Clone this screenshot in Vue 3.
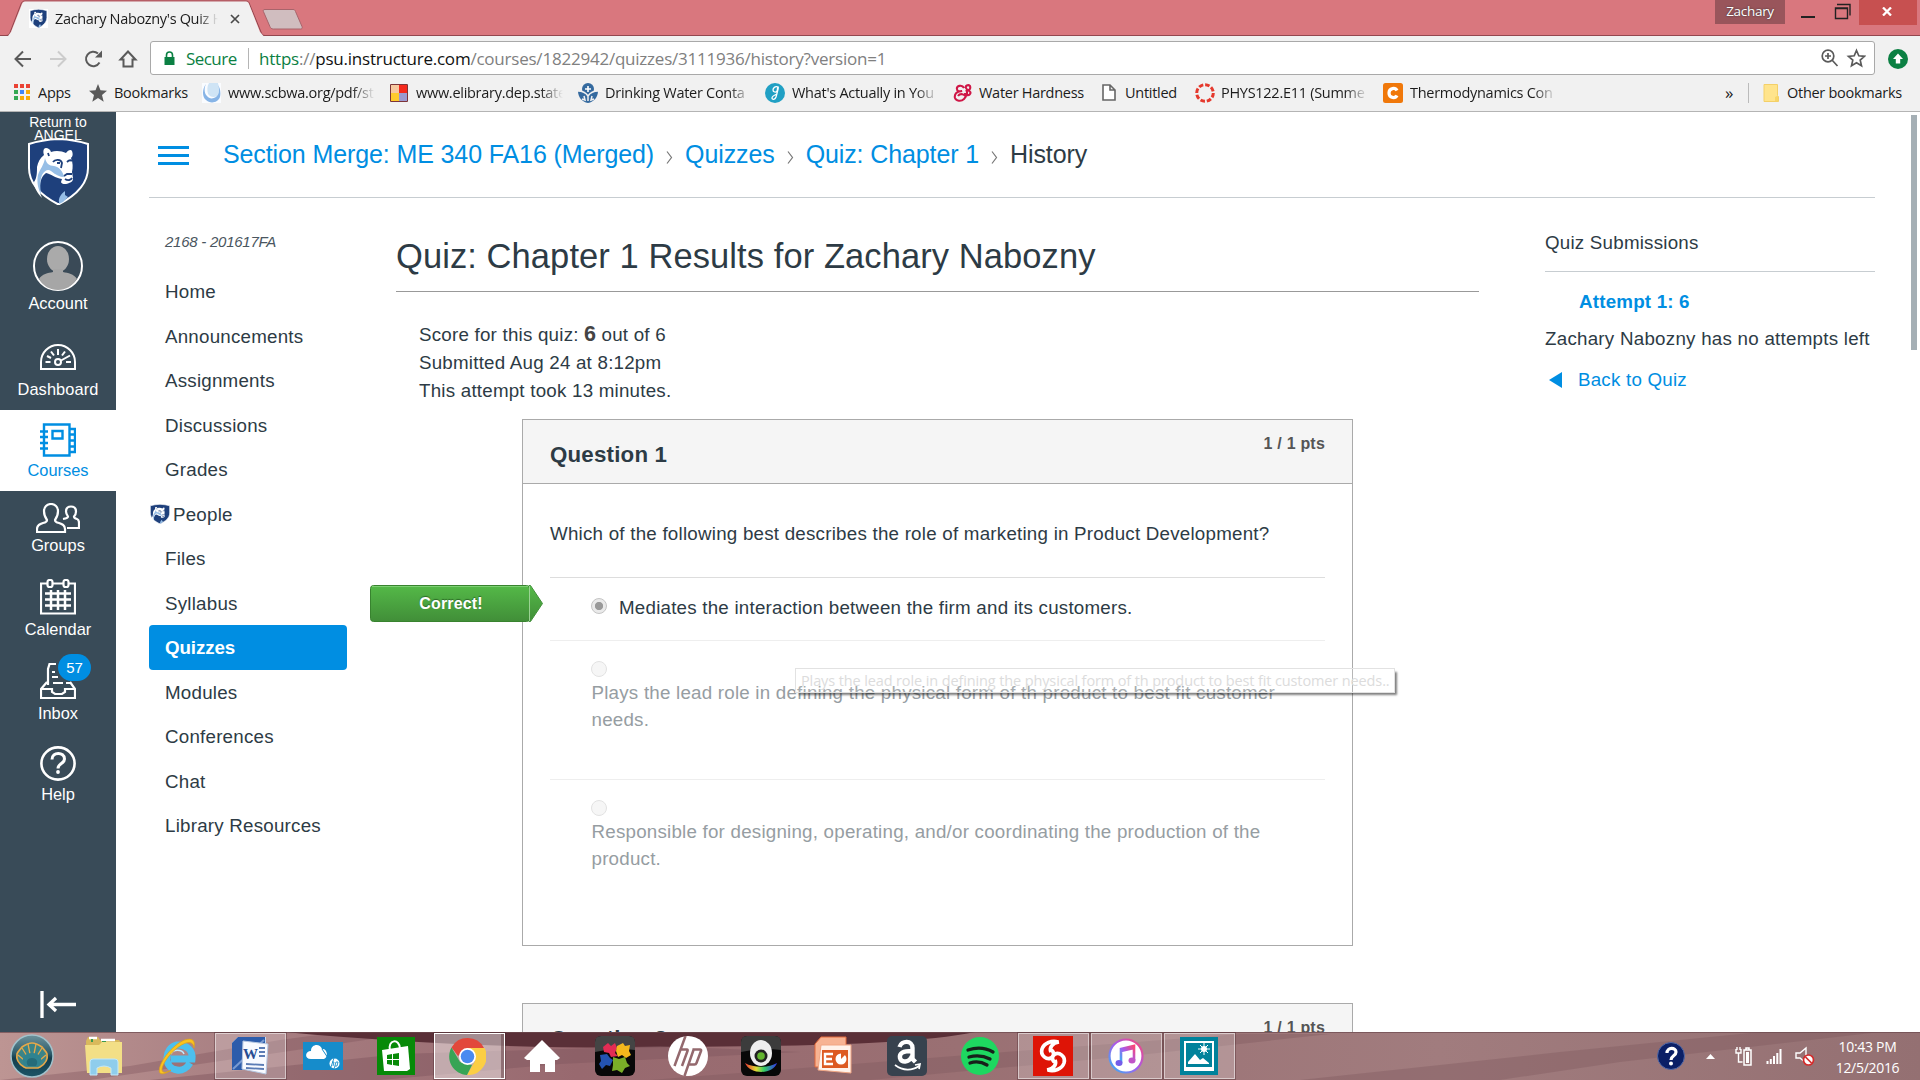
<script setup>
const bookmarks = [
  { icon: 'apps', text: 'Apps' },
  { icon: 'star', text: 'Bookmarks' },
  { icon: 'drop', text: 'www.scbwa.org/pdf/st', fade: true },
  { icon: 'grid', text: 'www.elibrary.dep.state', fade: true },
  { icon: 'water', text: 'Drinking Water Conta', fade: true },
  { icon: 'glass', text: "What's Actually in You", fade: true },
  { icon: 'amp', text: 'Water Hardness' },
  { icon: 'doc', text: 'Untitled' },
  { icon: 'ring', text: 'PHYS122.E11 (Summe', fade: true },
  { icon: 'chegg', text: 'Thermodynamics Con', fade: true },
]
const globalNav = [
  { id: 'account', label: 'Account' },
  { id: 'dashboard', label: 'Dashboard' },
  { id: 'courses', label: 'Courses' },
  { id: 'groups', label: 'Groups' },
  { id: 'calendar', label: 'Calendar' },
  { id: 'inbox', label: 'Inbox' },
  { id: 'help', label: 'Help' },
]
const courseNav = ['Home', 'Announcements', 'Assignments', 'Discussions', 'Grades', 'People', 'Files', 'Syllabus', 'Quizzes', 'Modules', 'Conferences', 'Chat', 'Library Resources']
const crumbs = ['Section Merge: ME 340 FA16 (Merged)', 'Quizzes', 'Quiz: Chapter 1']
const tasks = [
  { id: 'shell' }, { id: 'folder' }, { id: 'ie' }, { id: 'word', open: true }, { id: 'cloud' }, { id: 'store' },
  { id: 'chrome', open: true, active: true }, { id: 'home' }, { id: 'puzzle' }, { id: 'hp' }, { id: 'cam' }, { id: 'ppt' },
  { id: 'amazon' }, { id: 'spotify' }, { id: 'swirl', open: true }, { id: 'itunes', open: true }, { id: 'photos', open: true },
]
</script>

<template>
  <div class="screen">
    <svg class="defs" width="0" height="0">
      <defs>
        <symbol id="lion" viewBox="0 0 61 67">
          <path d="M30.500 1C20 1.500 10 3 1 6v24c0 17 13 28 29.500 36.500C47 58 60 47 60 30V6C51 3 41 1.500 30.500 1z" fill="#1e407c" stroke="#fff" stroke-width="2" />
          <path d="M16 17c-1-3-1-7 2-7 2 0 4 1 5 4 5-2 11-1 15 1 2-3 5-4 6-2 1 3 1 5-1 7 2 5 2 9 1 14l1 6c0 3-1 4-4 5-3 2-8 1-8-1l1-3c-7-1-11-5-16-6-4 3-6 8-6 13-1 4 0 8 2 12C9 55 6 49 6 44c3-4 3-10 3-15 1-5 3-9 7-12z" fill="#fff" />
          <path d="M17 20c-1 7-5 11-7 17-1 5-1 12 3 19-1-8-1-14 1-19 3-5 6-6 9-4 5 4 9 6 13 6-1-6-5-10-10-11-5 0-8-3-9-8z" fill="#96bee6" />
          <path d="M25 24c2-3 8-3 9 1l-1 5M39 24c2-2 4-2 5-1M29 25h3M36 38l3-2h5M37 41c3 2 6 1 7-1M20 15l1 3" fill="none" stroke="#1e407c" stroke-width="1.800" />
          <path d="M31 64c-1-4 3-9 6-11v4l3 2-5 5-4 2z" fill="#96bee6" />
        </symbol>
      </defs>
    </svg>

    <header class="chrome">
      <div class="titlebar">
        <svg class="tabshape" width="310" height="36" viewBox="0 0 310 36">
          <path d="M0 35.500h6c2 0 3-1 4-3L21 4c.700-2 2-3 4-3h221c2 0 3 1 3.500 3L261 32c1 2.500 2 3.500 4 3.500h45" fill="none" stroke="#93474f" />
          <path d="M8 36l3-4L22 4c.600-1.500 1.500-2.500 3-2.500h221c1.500 0 2.500 1 3 2.500L260 32l3.500 4z" fill="#f1f1f1" />
          <path d="M265 9.500h28c1.500 0 2 .500 2.500 2l6.500 15c.600 1.500 0 2.500-1.500 2.500h-27c-2 0-3-1-3.600-2.500l-6.500-15c-.500-1.500 0-2 1.600-2z" fill="#d0bdbf" stroke="#a8646b" />
        </svg>
        <div class="tab">
          <svg class="fav" width="19" height="19"><rect width="19" height="19" fill="#fff" /><use href="#lion" width="19" height="19" /></svg>
          <span class="tabtitle">Zachary Nabozny's Quiz H</span>
          <svg width="10" height="10" viewBox="0 0 10 10"><path d="M1 1l8 8M9 1l-8 8" stroke="#4a4a4a" stroke-width="1.700" /></svg>
        </div>
        <div class="winctl">
          <span class="user">Zachary</span>
          <svg width="74" height="25" viewBox="0 0 74 25"><path d="M16 17h14" stroke="#222" stroke-width="2" /><path d="M50.500 8h12v10.500h-12zM50 8.500h13M52 4.500h13v11" fill="none" stroke="#222" stroke-width="1.400" /></svg>
          <span class="close"><svg width="10" height="9" viewBox="0 0 10 9"><path d="M1 .500l8 8M9 .500l-8 8" stroke="#fff" stroke-width="2.300" /></svg></span>
        </div>
      </div>
      <div class="toolbar">
        <svg class="navbtns" width="150" height="34" viewBox="0 0 150 34" fill="none" stroke="#5a5a5a" stroke-width="2">
          <path d="M31 18H16M23 10.500L15.500 18l7.500 7.500" />
          <path d="M50 18h15M58 10.500l7.500 7.500-7.500 7.500" stroke="#ccc" />
          <path d="M99.500 21.500a7.200 7.200 0 1 1-1.500-9" /><path d="M102 9.500v7h-7z" fill="#5a5a5a" stroke="none" />
          <path d="M128 10.500l-7.500 8h3v7h9v-7h3z" />
        </svg>
        <div class="omni">
          <svg width="11" height="15" viewBox="0 0 11 15"><path d="M.500 6h10v8H.500z" fill="#0b8043" /><path d="M2.500 6V4a3 3 0 0 1 6 0v2" fill="none" stroke="#0b8043" stroke-width="1.600" /></svg>
          <span class="secure">Secure</span>
          <span class="url"><b>https</b><i>://</i>psu.instructure.com<i>/courses/1822942/quizzes/3111936/history?version=1</i></span>
          <svg class="omniicons" width="46" height="20" viewBox="0 0 46 20" fill="none" stroke="#5a5a5a" stroke-width="1.700"><circle cx="8" cy="8" r="5.800" /><path d="M12 12l5.500 6M5 8h6M8 5v6" /><path d="M36.500 2.500l2.300 5.300 5.700.500-4.300 3.800 1.300 5.700-5-3-5 3 1.300-5.700L28.500 8.300l5.700-.500z" /></svg>
        </div>
        <svg class="ext" width="20" height="20" viewBox="0 0 20 20"><circle cx="10" cy="10" r="10" fill="#0b8043" /><path d="M10 4.500l5 5.500h-2.800v4.500H7.800V10H5z" fill="#fff" /></svg>
      </div>
      <div class="bookmarks">
        <div v-for="b in bookmarks" :key="b.text" class="bm" :class="'bm-' + b.icon">
          <svg v-if="b.icon === 'apps'" width="17" height="17" viewBox="0 0 17 17"><path d="M0 0h4v4H0zM6 0h4v4H6zM12 0h4v4h-4z" fill="#ea4335" /><path d="M0 6h4v4H0zM0 12h4v4H0z" fill="#34a853" /><path d="M6 6h4v4H6z" fill="#4285f4" /><path d="M12 6h4v4h-4zM6 12h4v4H6zM12 12h4v4h-4z" fill="#fbab05" /></svg>
          <svg v-else-if="b.icon === 'star'" width="18" height="18" viewBox="0 0 18 18"><path d="M9 0l2.500 6.300 6.500.500-5 4.300 1.700 6.700L9 14l-5.700 3.800L5 11 0 6.800l6.500-.500z" fill="#5a5a5a" /></svg>
          <svg v-else-if="b.icon === 'drop'" width="19" height="20" viewBox="0 0 19 20"><rect width="19" height="20" fill="#fafcff" /><path d="M4 1c-4 5-4 13 0 16 4 4 12 3 14-3 1-5 0-10-3-13 2 5 2 10-1 13-3 2-7 2-9-1-3-3-3-8-1-12z" fill="#87b4e6" /><path d="M7 0h9c1 5 2 10-1 13-3 2-7 1-9-2-1-4-1-8 1-11z" fill="#cfe4f5" /></svg>
          <svg v-else-if="b.icon === 'grid'" width="18" height="18" viewBox="0 0 18 18"><path d="M1 1h8v8H1z" fill="#f7c9a0" /><path d="M9 1h8v8H9z" fill="#f52a1d" /><path d="M1 9h8v8H1z" fill="#ffcb2e" /><path d="M9 9h8v8H9z" fill="#9c9ad0" /><path d="M.500.500h17v17H.500z" fill="none" stroke="#7c3438" /></svg>
          <svg v-else-if="b.icon === 'water'" width="20" height="20" viewBox="0 0 20 20"><circle cx="10" cy="6" r="6" fill="#356a9f" /><path d="M10 3v6M7 6h6" stroke="#fff" stroke-width="1.600" /><path d="M0 8c4 0 7 1 10 4 3-3 6-4 10-4 0 6-4 11-10 12C4 19 0 14 0 8z" fill="#356a9f" /><path d="M0 8c5 0 8 2 10 5 2-3 5-5 10-5M4 16l3 1-1-4M16 16l-3 1 1-4M10 13v5" fill="none" stroke="#f1f1f1" stroke-width="1.500" /></svg>
          <svg v-else-if="b.icon === 'glass'" width="20" height="20" viewBox="0 0 20 20"><circle cx="10" cy="10" r="10" fill="#21a0c4" /><path d="M13 4c-3-1-5 1-5 3s3 3 4 1 0-4 1-4-1 6-2 10c-1 3-4 3-4 1s3-3 5-4" fill="none" stroke="#fff" stroke-width="1.300" /></svg>
          <svg v-else-if="b.icon === 'amp'" width="19" height="18" viewBox="0 0 19 18"><path d="M11 4C9 0 3 2 4 5c0 2 2 3 5 2-5 0-8 3-7 7 1 3 6 4 9 1s4-7 2-9c3 1 5-1 4-4-2-2-5 0-4 2 1 3 6 3 4 6-1 2-5 1-5-1M5 12c2-3 7-2 8 1" fill="none" stroke="#cf1747" stroke-width="2.100" /></svg>
          <svg v-else-if="b.icon === 'doc'" width="14" height="17" viewBox="0 0 14 17"><path d="M1 1h7l5 5v10H1zM8 1v5h5" fill="#fff" stroke="#666" stroke-width="1.600" /></svg>
          <svg v-else-if="b.icon === 'ring'" width="20" height="20" viewBox="0 0 20 20"><circle cx="10" cy="10" r="8.300" fill="none" stroke="#e5392d" stroke-width="3" stroke-dasharray="4.600 1.900" /></svg>
          <svg v-else width="20" height="20" viewBox="0 0 20 20"><rect width="20" height="20" rx="2.500" fill="#f0780a" /><path d="M14 7.500C12.500 4.500 6 4.500 6 10s6.500 5.500 8 2.500" fill="none" stroke="#fff" stroke-width="3.200" /></svg>
          <span class="bmtext" :class="{ fade: b.fade }">{{ b.text }}</span>
        </div>
        <span class="more">»</span>
        <div class="other">
          <svg width="16" height="18" viewBox="0 0 16 18"><path d="M1 .500h13.500v11l1 1v5H1z" fill="#ffe48c" stroke="#f4d068" /><path d="M12 17v-4l3-1.500V17z" fill="#f8d668" /></svg>
          <span>Other bookmarks</span>
        </div>
      </div>
    </header>

    <div class="page">
      <nav class="gnav">
        <div class="brand">
          <span>Return to<br>ANGEL</span>
          <svg width="61" height="67"><use href="#lion" width="61" height="67" /></svg>
        </div>
        <div v-for="n in globalNav" :key="n.id" class="gitem" :class="n.id">
          <svg v-if="n.id === 'account'" width="50" height="50" viewBox="0 0 50 50"><circle cx="25" cy="25" r="24" fill="#3a4a57" stroke="#fff" stroke-width="2" /><ellipse cx="25" cy="18" rx="11" ry="13" fill="#aaa" /><path d="M6 38c3-5 9-6 14-7v-3h10v3c5 1 11 2 14 7-5 7-11 11-19 11S10 45 6 38z" fill="#a6a6a6" /></svg>
          <svg v-else-if="n.id === 'dashboard'" width="36" height="26" viewBox="0 0 36 26" fill="none" stroke="#fff" stroke-width="2"><path d="M1 25v-7a17 17 0 0 1 34 0v7z" /><circle cx="18" cy="18" r="3" /><path d="M21 16.500l9-5M5.500 18h5M26 18h5M7 12l4 2M11 7.500l3 4M18 5v6M25 7.500l-3 4" /></svg>
          <svg v-else-if="n.id === 'courses'" width="36" height="34" viewBox="0 0 36 34" fill="none" stroke="#008ee2" stroke-width="2.400"><path d="M4 1.500h25.500v31H4z" /><path d="M12.500 8h10v7.500h-10z" /><path d="M30 6h5v23h-5M30 11.500h5M30 17.500h5M30 23.500h5M0 8.500h8M0 14h8M0 20h8M0 25.500h8" /></svg>
          <svg v-else-if="n.id === 'groups'" width="44" height="30" viewBox="0 0 44 30" fill="none" stroke="#fff" stroke-width="2.200"><path d="M1 29v-3c0-4 3-5 6-6 3-.600 4-1.500 4-3-3-4-3-7-3-9 0-4 3-7 7-7s7 3 7 7c0 2 0 5-3 9 0 1.500 1 2.400 4 3 3 1 6 2 6 6v3z" /><path d="M27 16c3-.500 5-1 5-2.500-2-3-2-4-2-5 0-3 2-5 5-5s5 2 5 5c0 1 0 3-2 5 0 1.500 1 2 3 2.500s2 2 2 4V25H31" /></svg>
          <svg v-else-if="n.id === 'calendar'" width="36" height="36" viewBox="0 0 36 36" fill="none" stroke="#fff" stroke-width="2.200"><path d="M7 4.500H1v30h34v-30h-6M13 4.500h10" /><rect x="7.500" y="1" width="5" height="7" rx="2" /><rect x="23.500" y="1" width="5" height="7" rx="2" /><path d="M11 11v20M18 11v20M25 11v20M5 14.500h26M5 20.500h26M5 26.500h26" stroke-width="2.500" /></svg>
          <svg v-else-if="n.id === 'inbox'" width="36" height="36" viewBox="0 0 36 36" fill="none" stroke="#fff" stroke-width="2.200"><path d="M7 19l-6 7v9h34v-9l-5-7M1 26h11v3l3 2h7l3-2v-3h10M8 22V6l1.500-5H16M12 9h3M12 14h6M13 20h10M26 20h4" /></svg>
          <svg v-else width="36" height="35" viewBox="0 0 36 35" fill="none" stroke="#fff" stroke-width="2.600"><ellipse cx="18" cy="17.500" rx="16.600" ry="16.100" /><path d="M12 13.500c0-8 12.500-8 12.500-.500 0 5-6.500 4-6.500 9.500" stroke-width="3" /><circle cx="18" cy="26" r="1.900" fill="#fff" stroke="none" /></svg>
          <span v-if="n.id === 'inbox'" class="badge">57</span>
          <span class="glabel">{{ n.label }}</span>
        </div>
        <svg class="collapse" width="36" height="27" viewBox="0 0 36 27" fill="none" stroke="#fff" stroke-width="3.300"><path d="M2 0v27M36 13.500H9M16 7l-7 6.500 7 6.500" /></svg>
      </nav>

      <div class="body">
        <div class="crumbs">
          <svg class="burger" width="31" height="19" viewBox="0 0 31 19"><path d="M0 1.500h31M0 9.500h31M0 17.500h31" stroke="#008ee2" stroke-width="3" /></svg>
          <template v-for="c in crumbs" :key="c">
            <a>{{ c }}</a>
            <svg class="sep" width="7" height="13" viewBox="0 0 7 13"><path d="M1 .500l4.500 6L1 12.500" fill="none" stroke="#777" stroke-width="1.200" /></svg>
          </template>
          <span>History</span>
        </div>
        <div class="cols">
          <aside class="left">
            <div class="term">2168 - 201617FA</div>
            <ul>
              <li v-for="c in courseNav" :key="c" :class="{ on: c === 'Quizzes', ppl: c === 'People' }">
                <svg v-if="c === 'People'" width="20" height="20" viewBox="0 0 61 67" preserveAspectRatio="none"><use href="#lion" width="61" height="67" /></svg><span>{{ c }}</span>
              </li>
            </ul>
          </aside>

          <main class="main">
            <h1>Quiz: Chapter 1 Results for Zachary Nabozny</h1>
            <div class="score">
              <div>Score for this quiz: <b>6</b> out of 6</div>
              <div>Submitted Aug 24 at 8:12pm</div>
              <div>This attempt took 13 minutes.</div>
            </div>
            <section class="question">
              <div class="qhead"><h2>Question 1</h2><span class="pts">1 / 1 pts</span></div>
              <p class="qtext">Which of the following best describes the role of marketing in Product Development?</p>
              <div class="answer a1">
                <span class="radio sel"></span><span>Mediates the interaction between the firm and its customers.</span>
                <div class="flag">
                  <svg width="173" height="37" viewBox="0 0 173 37">
                    <defs><linearGradient id="g1" x1="0" y1="0" x2="0" y2="1"><stop offset="0" stop-color="#54b948" /><stop offset="1" stop-color="#418e38" /></linearGradient></defs>
                    <path d="M159 .500h1.500L172.500 18.500 160.500 36.500H159z" fill="url(#g1)" stroke="#43923b" />
                    <rect x=".5" y=".5" width="159" height="36" rx="3" fill="url(#g1)" stroke="#38832f" />
                    <path d="M2 1.500h156" stroke="#7ccf72" /><path d="M159.500 1v35" stroke="#9bd293" />
                  </svg>
                  <b>Correct!</b>
                </div>
              </div>
              <div class="answer dim a2"><span class="radio"></span><div>Plays the lead role in defining the physical form of th product to best fit customer needs.</div></div>
              <div class="answer dim a3"><span class="radio"></span><div>Responsible for designing, operating, and/or coordinating the production of the product.</div></div>
              <div class="tip">Plays the lead role in defining the physical form of th product to best fit customer needs..</div>
            </section>
            <section class="question second">
              <div class="qhead"><h2>Question 2</h2><span class="pts">1 / 1 pts</span></div>
            </section>
          </main>

          <aside class="right">
            <h3>Quiz Submissions</h3>
            <a class="attempt">Attempt 1: 6</a>
            <p>Zachary Nabozny has no attempts left</p>
            <a class="back"><svg width="13" height="16" viewBox="0 0 13 16"><path d="M13 0v16L0 8z" fill="#008ee2" /></svg>Back to Quiz</a>
          </aside>
        </div>
        <div class="scroll"></div>
      </div>
    </div>

    <footer class="taskbar">
      <svg class="wall" width="1920" height="48" viewBox="0 0 1920 48" preserveAspectRatio="none">
        <defs>
          <linearGradient id="wl" x1="0" y1="0" x2="1" y2="0">
            <stop offset="0" stop-color="#bd9593" /><stop offset=".12" stop-color="#a98083" /><stop offset=".3" stop-color="#98696f" /><stop offset=".5" stop-color="#9a7073" /><stop offset=".75" stop-color="#a17c7e" /><stop offset="1" stop-color="#947072" />
          </linearGradient>
        </defs>
        <rect width="1920" height="48" fill="url(#wl)" />
        <path d="M0 48l130-14 150-26 60-8h80L200 32 90 48z" fill="#7c5159" opacity=".35" />
        <path d="M285 0h690c-60 12-160 14-300 15-130 2-250-2-390-15z" fill="#5a2f37" />
        <path d="M150 48l250-26 260-8 140 6-240 12-180 16z" fill="#825860" opacity=".5" />
        <path d="M650 48l330-26 260-20h90l-200 22-260 24zM1300 48l260-28 200-20h120l-260 30-120 18z" fill="#7f5a60" opacity=".4" />
        <path d="M0 .500h1920" stroke="#6d4a4f" opacity=".7" />
      </svg>
      <div v-for="t in tasks" :key="t.id" class="slot">
        <div class="tbtn" :class="{ open: t.open, active: t.active }">
          <svg v-if="t.id === 'shell'" width="44" height="44" viewBox="0 0 44 44"><defs><linearGradient id="sh" x1="0" y1="0" x2="0" y2="1"><stop offset="0" stop-color="#6d929c" /><stop offset=".45" stop-color="#2c5a69" /><stop offset=".55" stop-color="#143d4d" /><stop offset="1" stop-color="#1b5566" /></linearGradient></defs><circle cx="22" cy="22" r="21" fill="url(#sh)" stroke="#a2c2cb" stroke-width="1.500" /><path d="M14 33c-5-3-8-8-7-13 1-3 3-4 5-7 3-2 6-4 10-4s7 2 10 4c2 3 4 4 5 7 1 5-2 10-7 13l-2 1H16z" fill="#3b8488" stroke="#e5a84a" stroke-width="1.700" /><path d="M17 22l-5-8M20 20l-2-10M24 20l2-10M27 22l5-8M14 26l-6-5M30 26l6-5" stroke="#e5a84a" stroke-width="1.300" /><path d="M15 32c-5-7-1-13 7-13s12 6 7 13z" fill="#2f8390" /><path d="M18 32c-3-5 0-8 4-8s7 3 4 8z" fill="#246c7a" /></svg>
          <svg v-else-if="t.id === 'folder'" width="40" height="40" viewBox="0 0 40 40"><path d="M2 5l2-4h10l2 3h19l2 3v29H3z" fill="#d9b95c" /><path d="M5 2h8M17 4h14" stroke="#fff" stroke-width="2.500" /><path d="M8 3v3M18 6h4" stroke="#3d9b4d" stroke-width="2" /><path d="M1 9h14l3-3h20v31H3z" fill="#f3df86" /><path d="M6 39V26q0-3 3-3h22q3 0 3 3v13h-7v-7q-7-4-14 0v7z" fill="#8fcdec" stroke="#c2e8fa" /></svg>
          <svg v-else-if="t.id === 'ie'" width="40" height="40" viewBox="0 0 40 40"><path d="M33 27c-3 5-8 8-13 7C6 32 7 12 20 9c10-1 16 6 15 14H14" fill="none" stroke="#4cc0ee" stroke-width="7" /><path d="M14 18c2-5 11-5 13 0" fill="none" stroke="#bdeaff" stroke-width="1.500" /><path d="M37 12c3-13-10-10-19-2C7 19 0 33 3 37c2 2 7 0 11-3C4 40 1 34 12 20 22 8 36 1 37 12z" fill="#fac31e" stroke="#dba018" stroke-width=".7" /></svg>
          <svg v-else-if="t.id === 'word'" width="40" height="40" viewBox="0 0 40 40"><path d="M8 1h28v33H2V7z" fill="#c5dcf4" /><path d="M8 1h27v6L14 34H2V7z" fill="#2c5cab" /><path d="M3 33L34 4" stroke="#799bd2" stroke-width="2" /><path d="M13 5l25 3-2 30-24-5z" fill="#f8faff" stroke="#b5c6e0" /><text x="13" y="23" class="serif" fill="#294d92" font-size="15">W</text><path d="M29 12h6M29 16h6M29 20h6M16 28l18 1M16 32l18 1" stroke="#5b7cb5" stroke-width="1.800" /></svg>
          <svg v-else-if="t.id === 'cloud'" width="40" height="28" viewBox="0 0 40 28"><rect width="40" height="28" fill="#168ccb" /><path d="M8 17c-7 0-6-8 0-8 0-7 9-8 11-2 5-1 7 8 2 10z" fill="#fff" /><path d="M19 7l6 9" stroke="#168ccb" /><circle cx="31.500" cy="21.500" r="5" fill="#fff" /><path d="M31 16l-3 9M29 20h2l-1 4M33 20l-2 7M33 20h2l-1 4h-2" stroke="#168ccb" fill="none" stroke-width=".9" /></svg>
          <svg v-else-if="t.id === 'store'" width="38" height="38" viewBox="0 0 38 38"><rect width="38" height="38" fill="#078a08" /><path d="M13 14c-3-12 10-13 10-2" fill="none" stroke="#fff" stroke-width="2" /><path d="M5 13l26-4 2 23-3 2H7z" fill="#fff" /><path d="M10 18l5-1v5h-5zM16 17l6-1v6h-6zM10 23h5v5l-5-1zM16 23h6v6l-6-1z" fill="#078a08" /></svg>
          <svg v-else-if="t.id === 'chrome'" width="37" height="37" viewBox="0 0 37 37"><path d="M2.500 9.500A18.500 18.500 0 0 1 35 10L18 10l-9 8z" fill="#e2483b" /><path d="M18.500 10H35.500A18.500 18.500 0 0 1 18 37l8-14z" fill="#fbce44" /><path d="M2.500 9.500L11 24l12 3-5 10A18.500 18.500 0 0 1 2.500 9.500z" fill="#37a455" /><circle cx="18.500" cy="18.500" r="8.500" fill="#fff" /><circle cx="18.500" cy="18.500" r="6.800" fill="#4a8af0" /></svg>
          <svg v-else-if="t.id === 'home'" width="38" height="34" viewBox="0 0 38 34"><path d="M19 1l18 18-3 2h-2v12H22v-8h-5v8H7V21H4l-3-2z" fill="#fff" /></svg>
          <svg v-else-if="t.id === 'puzzle'" width="40" height="40" viewBox="0 0 40 40"><rect width="40" height="40" rx="6" fill="#080808" /><path d="M0 16V6q0-6 6-6h28q6 0 6 6v8q-20-3-40 2z" fill="#444" /><path d="M8 11l5-4 3 3 4-3 2 5-2 5 3 3-7 1-2-4-5-1z" fill="#e22c54" /><path d="M22 10l6-3 2 3 5-1-1 6 2 4-5 3-4-3-4 2-2-6z" fill="#f4b81c" /><path d="M5 19l7-1 3 4 3 2-3 6-4-1-4 4-3-5 2-3z" fill="#2453b0" /><path d="M18 21l6 2 6-2 2 6 3 3-5 2-3 5-5-3-5 1 1-6z" fill="#7aae28" /></svg>
          <svg v-else-if="t.id === 'hp'" width="40" height="40" viewBox="0 0 40 40"><circle cx="20" cy="20" r="20" fill="#fff" /><path d="M17.500 0L6.500 30M12.500 13.500h6.500q1 0 .500 1.500L14 30M26 12.500L16.500 40M24.500 13.500H32q1.500 0 1 1.500l-4.500 12q-.500 1.500-2 1.500h-6" fill="none" stroke="#94696e" stroke-width="2.500" /></svg>
          <svg v-else-if="t.id === 'cam'" width="40" height="40" viewBox="0 0 40 40"><defs><linearGradient id="rb"><stop offset="0" stop-color="#e33" /><stop offset=".35" stop-color="#dd3" /><stop offset=".6" stop-color="#3c6" /><stop offset="1" stop-color="#33e" /></linearGradient></defs><rect width="40" height="40" rx="6" fill="#080808" /><path d="M0 16V6q0-6 6-6h28q6 0 6 6v8q-20-3-40 2z" fill="#3c3c3c" /><path d="M4 27c8 5 24 5 32 0-4 12-27 12-32 0z" fill="url(#rb)" /><ellipse cx="20" cy="17" rx="11" ry="13" fill="#eee" /><circle cx="20" cy="20" r="6.500" fill="#222" /><circle cx="20" cy="20" r="3.800" fill="#63b52f" /></svg>
          <svg v-else-if="t.id === 'ppt'" width="40" height="40" viewBox="0 0 40 40"><path d="M7 1h25v30H1V8z" fill="#f7b393" stroke="#e2683a" /><path d="M7 9h30v28L4 34z" fill="#fff2ea" stroke="#f0a583" /><path d="M8 14h26v18H8z" fill="#dd5a22" /><path d="M19 18h-8v10h8M11 23h7" fill="none" stroke="#fff" stroke-width="2.400" /><circle cx="27" cy="23" r="5.500" fill="#fff" /><path d="M27 23v-6h6z" fill="#dd5a22" /></svg>
          <svg v-else-if="t.id === 'amazon'" width="40" height="40" viewBox="0 0 40 40"><rect width="40" height="40" rx="5" fill="#37424e" /><path d="M12.500 11c2-7 13-7 13 1v11l3 3M25 15c-9 0-13 2-12 7s9 5 12-2" fill="none" stroke="#fff" stroke-width="4.400" /><path d="M8 29c8 6 17 6 24 1M28 29l5-1-1 5" fill="none" stroke="#fff" stroke-width="1.700" /></svg>
          <svg v-else-if="t.id === 'spotify'" width="38" height="38" viewBox="0 0 38 38"><circle cx="19" cy="19" r="19" fill="#1ed760" /><path d="M7 13c9-3 18-2 25 2M8 20c8-2 15-1 21 2M9 26c6-2 12-1 17 2" fill="none" stroke="#17201a" stroke-width="3.300" stroke-linecap="round" /></svg>
          <svg v-else-if="t.id === 'swirl'" width="40" height="40" viewBox="0 0 40 40"><rect width="40" height="40" fill="#de1406" /><path d="M25 6c-6-2-14 1-16 7-2 7 5 11 9 9 4-2 3-8-1-8M15 34c6 2 14-1 16-7 2-7-5-11-9-9-4 2-3 8 1 8M26 6c-7 1-10 6-8 10M14 34c7-1 10-6 8-10" fill="none" stroke="#fff" stroke-width="3.700" /></svg>
          <svg v-else-if="t.id === 'itunes'" width="36" height="36" viewBox="0 0 36 36"><defs><linearGradient id="it" x1="0" y1="1" x2="1" y2="0"><stop offset="0" stop-color="#31b6f5" /><stop offset=".5" stop-color="#a65bec" /><stop offset="1" stop-color="#fb4674" /></linearGradient></defs><circle cx="18" cy="18" r="16.500" fill="#fff" stroke="url(#it)" stroke-width="2.200" /><path d="M13 25V11l13-3v14M13 13l13-3" fill="none" stroke="url(#it)" stroke-width="2.600" /><ellipse cx="11" cy="25" rx="3.500" ry="3" fill="#745ce9" /><ellipse cx="24" cy="22.500" rx="3.500" ry="3" fill="#c054c8" /></svg>
          <svg v-else width="38" height="38" viewBox="0 0 38 38"><rect width="38" height="38" fill="#00829b" /><path d="M5 5h28v28H5z" fill="none" stroke="#fff" stroke-width="2" /><path d="M8 25l7-8 5 6 3-2 6 5v1H8zM4 30h30v3H4z" fill="#fff" /><circle cx="24" cy="12" r="3" fill="#fff" /><path d="M24 6v12M18 12h12M20 8l8 8M28 8l-8 8" stroke="#fff" stroke-width="1" /></svg>
        </div>
      </div>
      <div class="tray">
        <svg width="28" height="28" viewBox="0 0 28 28"><circle cx="14" cy="14" r="13.500" fill="#0b1f66" stroke="#5269a8" /><path d="M10 11c0-6 9-6 9-1 0 4-5 3.500-5 8" fill="none" stroke="#fff" stroke-width="3.200" /><circle cx="14" cy="21.500" r="2" fill="#fff" /></svg>
        <svg class="caret" width="9" height="5" viewBox="0 0 9 5"><path d="M0 5l4.500-5L9 5z" fill="#fff" /></svg>
        <svg class="batt" width="18" height="20" viewBox="0 0 18 20"><path d="M9 4h7v15H9zM11 2h3v2h-3z" fill="none" stroke="#fff" stroke-width="1.500" /><path d="M11 6h3v11h-3z" fill="#fff" /><path d="M1 3v4h5V3M3.500 7v9h4M2 1v3M5 1v3" fill="none" stroke="#fff" stroke-width="1.400" /></svg>
        <svg class="sig" width="16" height="16" viewBox="0 0 16 16"><path d="M1.500 16v-3M4.800 16v-5M8 16V8M11.300 16V5M14.500 16V1" stroke="#fff" stroke-width="2" /></svg>
        <svg class="snd" width="20" height="20" viewBox="0 0 20 20"><path d="M1 7h4l6-5v15l-6-5H1z" fill="none" stroke="#fff" stroke-width="1.400" /><circle cx="13.500" cy="14" r="5" fill="#fff" stroke="#d42b2b" stroke-width="1.700" /><path d="M10.500 11l6 6" stroke="#d42b2b" stroke-width="1.700" /></svg>
        <div class="clock"><span>10:43 PM</span><span>12/5/2016</span></div>
      </div>
    </footer>
  </div>
</template>

<style>
body { margin: 0; overflow: hidden; }
</style>

<style scoped>
* { box-sizing: border-box; }
svg { display: block; flex: none; }
h1, h2, h3, p, ul { margin: 0; padding: 0; font-weight: normal; }
.defs { position: absolute; }
.screen { width: 1920px; height: 1080px; overflow: hidden; display: flex; flex-direction: column; background: #fff; font-family: "Liberation Sans", Arial, sans-serif; color: #2d3b45; white-space: nowrap; }

.chrome { height: 112px; flex: none; background: #f1f1f1; border-bottom: 1px solid #b4b4b4; font-family: "Open Sans", "Noto Sans", sans-serif; color: #1c1c1c; }
.titlebar { position: relative; height: 36px; background: #d9777e; border-bottom: 1px solid #93474f; display: flex; justify-content: space-between; }
.tabshape { position: absolute; left: 0; top: 0; }
.tab { position: relative; display: flex; align-items: center; height: 37px; padding-left: 29px; font-size: 14.500px; letter-spacing: -.33px; }
.tabtitle { width: 167px; margin: 0 8px 0 7px; overflow: hidden; -webkit-mask-image: linear-gradient(90deg, #000 143px, transparent 163px); mask-image: linear-gradient(90deg, #000 143px, transparent 163px); }
.winctl { position: relative; display: flex; height: 25px; margin-right: 3px; }
.user { width: 70px; height: 24px; background: #99555b; color: #fff; font-size: 13.500px; letter-spacing: -.3px; line-height: 23px; text-align: center; text-shadow: 0 0 2px #333; }
.close { width: 58px; background: #c75050; display: flex; align-items: center; justify-content: center; padding: 0 2px 2px 0; }
.toolbar { display: flex; height: 39px; padding-top: 5px; }
.omni { width: 1725px; height: 34px; border: 1px solid #a9a9a9; border-radius: 3px; background: #fff; display: flex; align-items: center; padding: 0 8px 0 13px; font-size: 17px; }
.secure { color: #0b8043; margin-left: 11px; width: 51px; letter-spacing: -.55px; line-height: 20px; padding-top: 1px; }
.url { border-left: 1px solid #b5b5b5; margin-left: 11px; padding: 1px 0 0 10px; line-height: 20px; letter-spacing: -.22px; color: #111; }
.url b { font-weight: normal; color: #0b8043; }
.url i { font-style: normal; color: #808080; }
.omniicons { margin-left: auto; }
.ext { margin: 8px 0 0 13px; }
.bookmarks { display: flex; align-items: center; height: 35px; padding-left: 14px; font-size: 14.500px; letter-spacing: -.28px; }
.bm { display: flex; align-items: center; flex: none; }
.bm-apps { width: 75px; } .bm-star { width: 113px; } .bm-drop { width: 188px; } .bm-grid { width: 188px; } .bm-water { width: 187px; }
.bm-glass { width: 188px; } .bm-amp { width: 149px; } .bm-doc { width: 93px; } .bm-ring { width: 188px; } .bm-chegg { width: 170px; }
.bmtext { margin-left: 7px; overflow: hidden; }
.bm-doc .bmtext { margin-left: 9px; }
.bm-grid .bmtext { margin-left: 8px; }
.bm-ring .bmtext { margin-left: 6px; }
.fade { width: 148px; -webkit-mask-image: linear-gradient(90deg, #000 124px, transparent 147px); mask-image: linear-gradient(90deg, #000 124px, transparent 147px); }
.more { margin-left: 172px; font-size: 17px; width: 23px; line-height: 20px; }
.other { display: flex; align-items: center; border-left: 1px solid #bbb; padding-left: 14px; gap: 8px; height: 20px; }

.page { height: 920px; flex: none; display: flex; overflow: hidden; }
.gnav { width: 116px; flex: none; background: #394b58; color: #fff; display: flex; flex-direction: column; font-size: 16.400px; }
.brand { height: 120px; display: flex; flex-direction: column; align-items: center; padding-top: 4px; font-size: 14px; line-height: 13px; text-align: center; }
.brand svg { margin: -4px 0 0 1px; position: relative; }
.gitem { position: relative; display: flex; flex-direction: column; align-items: center; }
.glabel { line-height: 20px; }
.account { height: 93px; padding-top: 9px; gap: 2px; }
.dashboard { height: 85px; padding-top: 19px; gap: 9px; letter-spacing: .1px; }
.courses { height: 81px; padding-top: 13px; gap: 3px; background: #fff; color: #008ee2; }
.groups { height: 76px; padding-top: 12px; gap: 2px; }
.calendar { height: 84px; padding-top: 12px; gap: 4px; }
.inbox { height: 84px; padding-top: 12px; gap: 4px; }
.help { height: 76px; padding-top: 11px; gap: 3px; }
.badge { position: absolute; left: 58px; top: 3px; width: 33px; height: 27px; border-radius: 14px; background: #008ee2; font-size: 15px; line-height: 27px; text-align: center; }
.collapse { margin: auto 0 14px 40px; }

.body { position: relative; flex: 1; padding: 0 45px 0 33px; }
.crumbs { height: 86px; border-bottom: 1px solid #c7cdd1; display: flex; align-items: center; padding: 0 0 1px 9px; font-size: 25px; letter-spacing: -.11px; }
.crumbs a { color: #008ee2; }
.burger { margin-right: 34px; margin-top: 2px; }
.sep { margin: 6px 12px 0 12px; }
.cols { display: flex; font-size: 18.750px; letter-spacing: .22px; }
.left { width: 198px; padding-top: 28px; }
.term { height: 43.250px; padding-top: 1px; line-height: 30px; font-size: 15px; font-style: italic; letter-spacing: -.25px; padding-left: 16px; color: #4a5660; }
.left li { height: 44.500px; padding-left: 16px; list-style: none; display: flex; align-items: center; border-radius: 4px; }
.left li span { padding-top: 1px; }
.left li.on { background: #008ee2; color: #fff; font-weight: bold; letter-spacing: -.1px; }
.left li.ppl { padding-left: 1px; gap: 3px; }
.main { width: 1083px; margin-left: 49px; padding-top: 28px; }
h1 { height: 66px; line-height: 60px; border-bottom: 1px solid #999; font-size: 34.500px; letter-spacing: .08px; }
.score { margin-top: 28px; height: 99px; padding-left: 23px; line-height: 28.500px; letter-spacing: .22px; }
.score div { height: 28.500px; }
.score b { font-size: 21.500px; color: #444; letter-spacing: 0; }
.question { position: relative; width: 831px; height: 527px; margin-left: 126px; border: 1px solid #aaa; }
.second { margin-top: 57px; }
.qhead { height: 64px; border-bottom: 1px solid #aaa; background: #f5f5f5; display: flex; justify-content: space-between; padding: 0 27px 0 27px; }
h2 { font-size: 22.300px; font-weight: bold; line-height: 70px; letter-spacing: .2px; }
.pts { font-size: 16px; font-weight: bold; color: #555; line-height: 47px; letter-spacing: .2px; }
.qtext { height: 93px; padding: 28px 0 0 27px; line-height: 44px; letter-spacing: .23px; }
.answer { position: relative; margin: 0 27px 0 27px; padding-left: 41px; border-top: 1px solid #ddd; }
.a1 { height: 63px; display: flex; gap: 12px; line-height: 60px; }
.radio { display: block; flex: none; width: 16px; height: 16px; border-radius: 50%; border: 1px solid #c4c4c4; background: #eee; }
.a1 .radio { margin-top: 20px; }
.sel { background: radial-gradient(circle, #999 0 3.700px, #eaeaea 4.500px); }
.dim { white-space: normal; line-height: 27px; border-color: #eee; }
.dim .radio { opacity: .5; }
.dim div { color: #969da2; width: 710px; padding-left: .500px; }
.a2 { height: 139px; padding-top: 20px; }
.a2 div { margin-top: 2px; }
.a3 { padding-top: 20px; }
.a3 div { margin-top: 2px; }
.flag { position: absolute; left: -180px; top: 7px; width: 173px; height: 37px; }
.flag b { position: absolute; left: 0; top: 0; width: 162px; line-height: 37px; text-align: center; color: #fff; font-size: 16px; letter-spacing: .15px; text-shadow: 0 -1px 1px #2c6a26; }
.tip { position: absolute; left: 272px; top: 248px; width: 600px; height: 25px; border: 1px solid #e2e2e2; background: rgba(255, 255, 255, .15); box-shadow: 3px 3px 2px -1px rgba(0, 0, 0, .5); color: #dcdcdc; font: 14.500px/23px "Open Sans", sans-serif; letter-spacing: -.12px; padding-left: 5px; }
.right { width: 330px; margin-left: 66px; padding-top: 28px; display: flex; flex-direction: column; }
h3 { font-size: 18.750px; height: 46px; line-height: 33px; border-bottom: 1px solid #c7cdd1; }
.right a { color: #008ee2; }
.attempt { font-weight: bold; margin: 14px 0 0 34px; line-height: 32px; letter-spacing: .2px; }
.right p { line-height: 32px; margin-top: 5px; letter-spacing: .25px; }
.back { display: flex; align-items: center; gap: 16px; padding-left: 4px; line-height: 32px; margin-top: 9px; }
.scroll { position: absolute; right: 3px; top: 3px; width: 6px; height: 235px; background: #a5afb5; }

.taskbar { position: relative; height: 48px; flex: none; display: flex; align-items: center; }
.wall { position: absolute; left: 0; top: 0; }
.slot { position: relative; width: 73px; flex: none; display: flex; justify-content: center; }
.slot:nth-of-type(1) { width: 67.500px; padding-right: 4px; }
.tbtn { width: 71px; height: 46px; display: flex; align-items: center; justify-content: center; }
.open { background: rgba(255, 255, 255, .22); border: 1px solid rgba(255, 255, 255, .5); outline: 1px solid rgba(70, 35, 40, .35); }
.active { background: rgba(255, 255, 255, .45); border-color: #fff; box-shadow: inset -4px 0 0 -1px rgba(110, 75, 80, .6); padding-right: 4px; }
.serif { font-family: "Liberation Serif", serif; font-weight: bold; }
.tray { position: relative; margin-left: auto; display: flex; align-items: center; color: #fff; font: 14px/21px "Open Sans", sans-serif; letter-spacing: -.3px; }
.caret { margin-left: 21px; }
.batt { margin-left: 20px; }
.sig { margin-left: 13px; }
.snd { margin-left: 13px; }
.clock { width: 105px; display: flex; flex-direction: column; align-items: center; margin-top: 2px; }
</style>
